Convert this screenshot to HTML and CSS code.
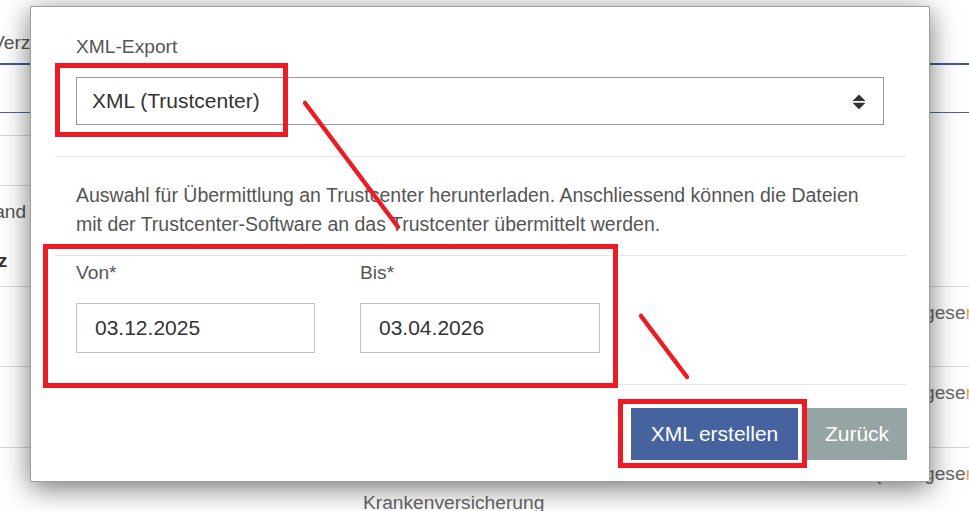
FILE: index.html
```html
<!DOCTYPE html>
<html lang="de">
<head>
<meta charset="utf-8">
<title>XML-Export</title>
<link rel="stylesheet" href="styles.css">
</head>
<body>
<div class="page">
  <div class="tabs"><span class="tab">Verzeichnis</span></div>
  <div class="rule-thick"></div>
  <div class="toolbar"></div>
  <div class="rule-thin"></div>
  <div class="side">
    <div class="side-row side-row-a"></div>
    <div class="side-row side-row-b"></div>
  </div>
  <div class="thead">
    <div class="th-line">Stand</div>
    <div class="th-line th-bold">Satz</div>
  </div>
  <div class="trow trow-1">
    <div class="c1"></div>
    <div class="c2"></div>
    <div class="c3"><span class="paren"></span><span class="state">gese<span class="hl">ndet</span></span></div>
  </div>
  <div class="trow trow-2">
    <div class="c1"></div>
    <div class="c2"></div>
    <div class="c3"><span class="paren"></span><span class="state">gese<span class="hl">ndet</span></span></div>
  </div>
  <div class="trow trow-3">
    <div class="c1"></div>
    <div class="c2">Gesetzliche<br>Krankenversicherung</div>
    <div class="c3"><span class="paren">(</span><span class="state">gese<span class="hl">ndet</span></span></div>
  </div>
</div>

<div class="modal">
  <div class="sec sec-export">
    <div class="lbl">XML-Export</div>
    <div class="select">
      <span class="select-text">XML (Trustcenter)</span>
      <svg class="select-arrows" width="14" height="16" viewBox="0 0 14 16" aria-hidden="true">
        <path d="M0.5 7 L7 0.5 L13.5 7 Z" fill="#333"/>
        <path d="M0.5 8.8 L13.5 8.8 L7 15.3 Z" fill="#333"/>
      </svg>
    </div>
  </div>
  <div class="sec sec-info">
    <p class="info">Auswahl für Übermittlung an Trustcenter herunterladen. Anschliessend können die Dateien<br>mit der Trustcenter-Software an das Trustcenter übermittelt werden.</p>
  </div>
  <div class="sec sec-dates">
    <div class="field field-von">
      <div class="lbl">Von*</div>
      <div class="input">03.12.2025</div>
    </div>
    <div class="field field-bis">
      <div class="lbl">Bis*</div>
      <div class="input">03.04.2026</div>
    </div>
  </div>
  <div class="footer">
    <button class="btn btn-primary">XML erstellen</button>
    <button class="btn btn-secondary">Zurück</button>
  </div>
</div>

<svg class="marks" width="969" height="511" viewBox="0 0 969 511" aria-hidden="true">
  <g fill="none" stroke="#ed1c24" stroke-width="5">
    <rect x="57.5" y="65.5" width="228" height="69"/>
    <rect x="45.5" y="246.5" width="570" height="139"/>
    <rect x="620.5" y="401.5" width="184" height="64"/>
  </g>
  <g stroke="#ed1c24" stroke-width="4.5" stroke-linecap="round">
    <line x1="305" y1="103" x2="398" y2="227"/>
    <line x1="641" y1="316" x2="687" y2="377"/>
  </g>
</svg>
</body>
</html>
```

FILE: styles.css
```css
html, body {
  margin: 0;
  padding: 0;
}

body {
  width: 969px;
  height: 511px;
  overflow: hidden;
  position: relative;
  background: #fff;
  font-family: "Liberation Sans", Arial, sans-serif;
  font-size: 19.2px;
  color: #555;
}

/* ---------- background page ---------- */
.page {
  width: 969px;
}

.tabs {
  height: 63px;
  box-sizing: border-box;
  padding-top: 29px;
  line-height: 28px;
  white-space: nowrap;
  overflow: hidden;
}

.tab {
  margin-left: -8px;
  color: #555;
}

.rule-thick {
  height: 2px;
  background: #3f5b98;
}

.toolbar {
  height: 47px;
}

.rule-thin {
  height: 1px;
  background: #4a64a0;
}

.side {
  width: 300px;
}

.side-row {
  border-bottom: 1px solid #d6d6d6;
}

.side-row-a {
  height: 22px;
}

.side-row-b {
  height: 49px;
}

.thead {
  height: 101px;
  box-sizing: border-box;
  padding-top: 12px;
  border-bottom: 1px solid #d6d6d6;
  white-space: nowrap;
}

.th-line {
  line-height: 28.8px;
  margin-left: -24px;
}

.th-bold {
  font-weight: bold;
  color: #333;
  margin-left: -32px;
  margin-top: 20px;
}

.trow {
  display: grid;
  grid-template-columns: 363px 512px 94px;
  box-sizing: border-box;
  padding-top: 12px;
  line-height: 28.8px;
  border-bottom: 1px solid #d6d6d6;
  white-space: nowrap;
  color: #666;
}

.trow-1 {
  height: 80px;
}

.trow-2 {
  height: 81px;
}

.trow-3 {
  height: 80px;
}

.c3 {
  display: flex;
  overflow: hidden;
}

.paren {
  width: 49px;
  flex: none;
}

.hl {
  color: #f0a05a;
}

/* ---------- modal ---------- */
.modal {
  position: absolute;
  left: 30px;
  top: 6px;
  width: 900px;
  height: 476px;
  box-sizing: border-box;
  padding: 0 23px 0 24px;
  background: #fff;
  border: 1px solid rgba(0, 0, 0, 0.38);
  box-shadow: 0 6px 26px rgba(0, 0, 0, 0.55);
}

.sec {
  border-bottom: 1px solid #e5e5e5;
}

.lbl {
  line-height: 28px;
  color: #555;
}

.sec-export {
  padding: 26px 22px 31px 21px;
}

.sec-export .lbl {
  margin-bottom: 16px;
}

.select {
  height: 48px;
  box-sizing: border-box;
  border: 1px solid #999;
  display: flex;
  align-items: center;
  justify-content: space-between;
  padding: 0 17px 0 15px;
}

.select-text {
  font-size: 21px;
  color: #333;
}

.select-arrows {
  display: block;
  margin-top: 1px;
}

.sec-info {
  padding: 24px 21px 16px 21px;
}

.info {
  margin: 0;
  font-size: 19.5px;
  line-height: 29px;
  color: #555;
}

.sec-dates {
  display: flex;
  gap: 45px;
  padding: 3px 21px 31px 21px;
}

.field-von {
  width: 239px;
}

.field-bis {
  width: 240px;
}

.field .lbl {
  margin-bottom: 16px;
}

.input {
  height: 50px;
  box-sizing: border-box;
  border: 1px solid #c2c2c2;
  padding-left: 18px;
  display: flex;
  align-items: center;
  font-size: 21px;
  color: #333;
}

.footer {
  display: flex;
  justify-content: flex-end;
  gap: 9px;
  padding-top: 23px;
  margin-right: -1px;
}

.btn {
  height: 52px;
  border: none;
  margin: 0;
  font-family: "Liberation Sans", Arial, sans-serif;
  font-size: 21px;
  color: #fff;
  cursor: pointer;
}

.btn-primary {
  width: 167px;
  background: #4663a0;
}

.btn-secondary {
  width: 100px;
  background: #95a5a6;
}

/* ---------- annotations ---------- */
.marks {
  position: absolute;
  left: 0;
  top: 0;
  pointer-events: none;
}
```
